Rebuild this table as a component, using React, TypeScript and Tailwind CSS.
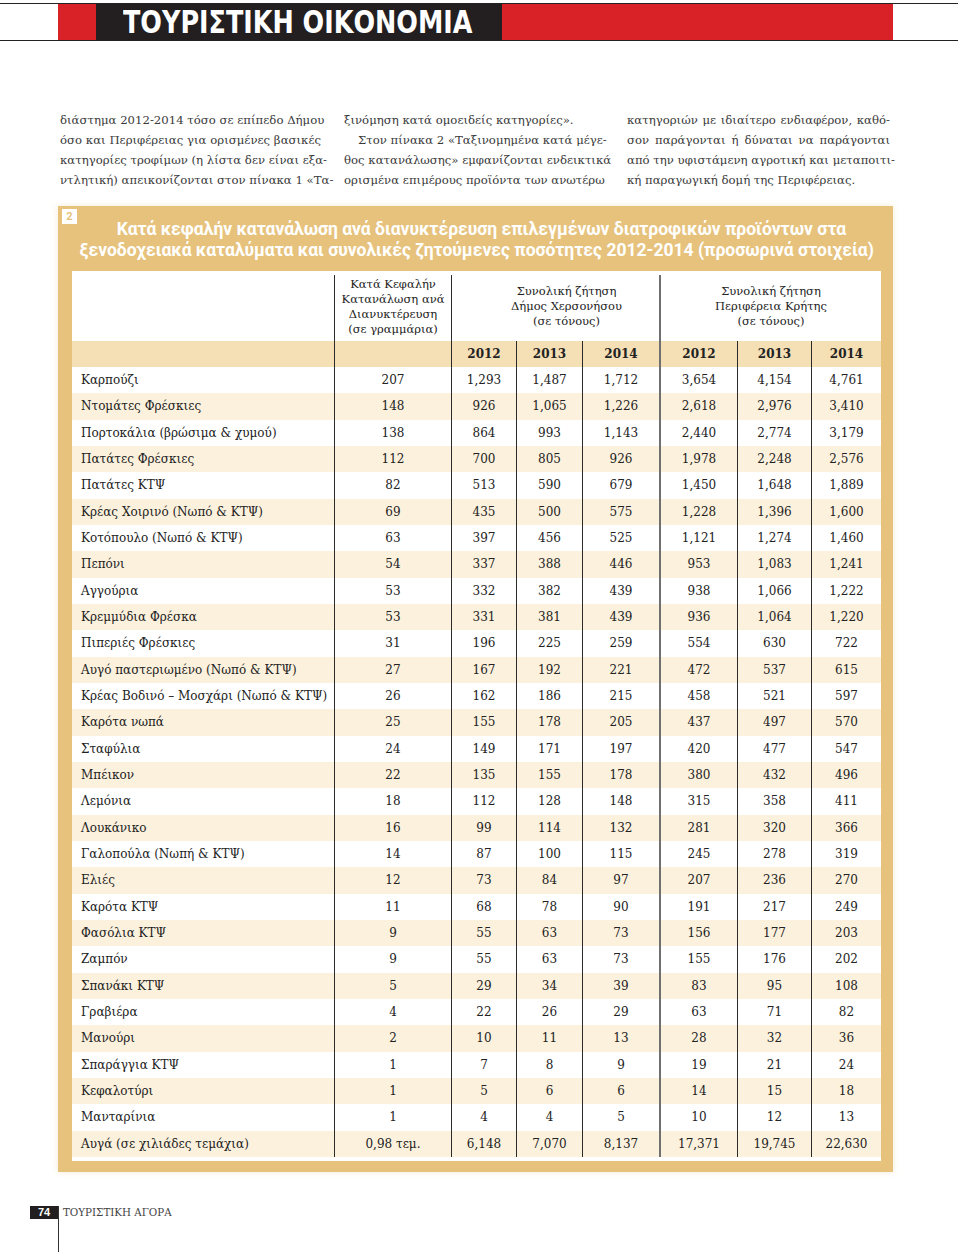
import React from 'react';

const rows: string[][] = [
  ['Καρπούζι', '207', '1,293', '1,487', '1,712', '3,654', '4,154', '4,761'],
  ['Ντομάτες Φρέσκιες', '148', '926', '1,065', '1,226', '2,618', '2,976', '3,410'],
  ['Πορτοκάλια (βρώσιμα & χυμού)', '138', '864', '993', '1,143', '2,440', '2,774', '3,179'],
  ['Πατάτες Φρέσκιες', '112', '700', '805', '926', '1,978', '2,248', '2,576'],
  ['Πατάτες ΚΤΨ', '82', '513', '590', '679', '1,450', '1,648', '1,889'],
  ['Κρέας Χοιρινό (Νωπό & ΚΤΨ)', '69', '435', '500', '575', '1,228', '1,396', '1,600'],
  ['Κοτόπουλο (Νωπό & ΚΤΨ)', '63', '397', '456', '525', '1,121', '1,274', '1,460'],
  ['Πεπόνι', '54', '337', '388', '446', '953', '1,083', '1,241'],
  ['Αγγούρια', '53', '332', '382', '439', '938', '1,066', '1,222'],
  ['Κρεμμύδια Φρέσκα', '53', '331', '381', '439', '936', '1,064', '1,220'],
  ['Πιπεριές Φρέσκιες', '31', '196', '225', '259', '554', '630', '722'],
  ['Αυγό παστεριωμένο (Νωπό & ΚΤΨ)', '27', '167', '192', '221', '472', '537', '615'],
  ['Κρέας Βοδινό – Μοσχάρι (Νωπό & ΚΤΨ)', '26', '162', '186', '215', '458', '521', '597'],
  ['Καρότα νωπά', '25', '155', '178', '205', '437', '497', '570'],
  ['Σταφύλια', '24', '149', '171', '197', '420', '477', '547'],
  ['Μπέικον', '22', '135', '155', '178', '380', '432', '496'],
  ['Λεμόνια', '18', '112', '128', '148', '315', '358', '411'],
  ['Λουκάνικο', '16', '99', '114', '132', '281', '320', '366'],
  ['Γαλοπούλα (Νωπή & ΚΤΨ)', '14', '87', '100', '115', '245', '278', '319'],
  ['Ελιές', '12', '73', '84', '97', '207', '236', '270'],
  ['Καρότα ΚΤΨ', '11', '68', '78', '90', '191', '217', '249'],
  ['Φασόλια ΚΤΨ', '9', '55', '63', '73', '156', '177', '203'],
  ['Ζαμπόν', '9', '55', '63', '73', '155', '176', '202'],
  ['Σπανάκι ΚΤΨ', '5', '29', '34', '39', '83', '95', '108'],
  ['Γραβιέρα', '4', '22', '26', '29', '63', '71', '82'],
  ['Μανούρι', '2', '10', '11', '13', '28', '32', '36'],
  ['Σπαράγγια ΚΤΨ', '1', '7', '8', '9', '19', '21', '24'],
  ['Κεφαλοτύρι', '1', '5', '6', '6', '14', '15', '18'],
  ['Μανταρίνια', '1', '4', '4', '5', '10', '12', '13'],
  ['Αυγά (σε χιλιάδες τεμάχια)', '0,98 τεμ.', '6,148', '7,070', '8,137', '17,371', '19,745', '22,630'],
];

const years = ['2012', '2013', '2014', '2012', '2013', '2014'];

// separators per column (index 0 = product label)
const sep = [
  'pl-[9px] text-left',
  'border-l border-[#2b2b2b] text-center',
  'border-l border-[#2b2b2b] text-center',
  'border-l border-[#2b2b2b] text-center',
  'border-l border-[#2b2b2b] text-center',
  'border-l-2 border-[#707070] text-center',
  'border-l border-[#2b2b2b] text-center',
  'border-l border-[#2b2b2b] text-center',
];

const gridCols = 'grid grid-cols-[262px_117px_65px_66px_77px_78px_74px_70px]';

const serif = "font-['DejaVu_Serif',serif]";

const Line = ({ text, justify = true, indent = false }: { text: string; justify?: boolean; indent?: boolean }) => (
  <div className={`${justify ? 'text-justify [text-align-last:justify]' : 'text-left'} ${indent ? 'pl-[14px]' : ''} whitespace-nowrap`}>
    {text}
  </div>
);

const App = () => {
  return (
    <div className={`w-[960px] h-[1257px] bg-white flex flex-col ${serif}`}>
      {/* Top section bar */}
      <div className="mt-[3px] w-[958px] h-[38px] border-y-[1.5px] border-[#222] flex">
        <div className="w-[58px] bg-white" />
        <div className="w-[38px] bg-[#d92128]" />
        <div className="w-[406px] bg-[#231f20] flex items-center pl-[27px] overflow-hidden">
          <span className="inline-block [transform-origin:left_center] [transform:scaleX(0.795)] font-['DejaVu_Sans',sans-serif] font-bold text-white text-[32px] leading-none whitespace-nowrap">
            ΤΟΥΡΙΣΤΙΚΗ ΟΙΚΟΝΟΜΙΑ
          </span>
        </div>
        <div className="w-[391px] bg-[#d92128]" />
        <div className="flex-1 bg-white" />
      </div>

      {/* Body text */}
      <div className="mt-[69px] flex text-[11.7px] leading-[20px] text-[#3a3a3a]">
        <div className="ml-[60px] w-[261px]">
          <Line text="διάστημα 2012-2014 τόσο σε επίπεδο Δήμου" />
          <Line text="όσο και Περιφέρειας για ορισμένες βασικές" />
          <Line text="κατηγορίες τροφίμων (η λίστα δεν είναι εξα-" />
          <Line text="ντλητική) απεικονίζονται στον πίνακα 1 «Τα-" />
        </div>
        <div className="ml-[23px] w-[258px]">
          <Line text="ξινόμηση κατά ομοειδείς κατηγορίες»." justify={false} />
          <Line text="Στον πίνακα 2 «Ταξινομημένα κατά μέγε-" indent />
          <Line text="θος κατανάλωσης» εμφανίζονται ενδεικτικά" />
          <Line text="ορισμένα επιμέρους προϊόντα των ανωτέρω" />
        </div>
        <div className="ml-[25px] w-[263px]">
          <Line text="κατηγοριών με ιδιαίτερο ενδιαφέρον, καθό-" />
          <Line text="σον παράγονται ή δύναται να παράγονται" />
          <Line text="από την υφιστάμενη αγροτική και μεταποιτι-" />
          <Line text="κή παραγωγική δομή της Περιφέρειας." justify={false} />
        </div>
      </div>

      {/* Table box */}
      <div className="mt-[16px] ml-[58px] w-[835px] bg-[#e6c27d] pl-[14px] pr-[12px] pb-[11px] shadow-[0_0_6px_rgba(230,194,125,0.35)]">
        <div className="relative h-[65px] pt-[13px]">
          <div className="absolute left-[-10px] top-[3px] w-[15px] h-[15px] bg-white flex items-center justify-center font-['Roboto',sans-serif] font-bold text-[11px] leading-none text-[#e6c27d]">
            2
          </div>
          <div className="text-center font-['Roboto','Open_Sans',sans-serif] font-bold text-white text-[17.5px] leading-[21px] whitespace-nowrap">
            <div className="pl-[10px]">Κατά κεφαλήν κατανάλωση ανά διανυκτέρευση επιλεγμένων διατροφικών προϊόντων στα</div>
            <div>ξενοδοχειακά καταλύματα και συνολικές ζητούμενες ποσότητες 2012-2014 (προσωρινά στοιχεία)</div>
          </div>
        </div>

        <div className="bg-white w-[809px] pt-1 pb-1 text-[#222]">
          {/* Group header */}
          <div className={`${gridCols} h-[66px] text-[11.5px] leading-[15px]`}>
            <div />
            <div className="border-l border-[#2b2b2b] flex flex-col items-center justify-center text-center pb-[2px] whitespace-nowrap">
              <div>Κατά Κεφαλήν</div>
              <div>Κατανάλωση ανά</div>
              <div>Διανυκτέρευση</div>
              <div>(σε γραμμάρια)</div>
            </div>
            <div className="col-span-3 border-l border-[#2b2b2b] flex flex-col items-center justify-center text-center pl-[22px] pb-[4px]">
              <div>Συνολική ζήτηση</div>
              <div>Δήμος Χερσονήσου</div>
              <div>(σε τόνους)</div>
            </div>
            <div className="col-span-3 border-l-2 border-[#707070] flex flex-col items-center justify-center text-center pb-[4px]">
              <div>Συνολική ζήτηση</div>
              <div>Περιφέρεια Κρήτης</div>
              <div>(σε τόνους)</div>
            </div>
          </div>

          {/* Year header */}
          <div className={`${gridCols} h-[26px] bg-[#f5dfb4] text-[12px] font-bold`}>
            <div />
            <div className="border-l border-[#2b2b2b]" />
            {years.map((y, i) => (
              <div key={i} className={`${sep[i + 2]} flex items-center justify-center`}>
                {y}
              </div>
            ))}
          </div>

          {/* Data rows */}
          {rows.map((r, ri) => (
            <div key={ri} className={`${gridCols} h-[26.33px] text-[12px] ${ri % 2 === 1 ? 'bg-[#fcf1dd]' : 'bg-white'}`}>
              {r.map((c, ci) => (
                <div key={ci} className={`${sep[ci]} flex items-center ${ci === 0 ? 'justify-start' : 'justify-center'} whitespace-nowrap`}>
                  {c}
                </div>
              ))}
            </div>
          ))}
        </div>
      </div>

      {/* Footer */}
      <div className="mt-[34px] flex">
        <div className="ml-[30px] w-[28px] h-[13px] bg-[#231f20] flex items-center justify-center font-['Liberation_Sans',sans-serif] font-bold text-white text-[11px] leading-none">
          74
        </div>
        <div className="w-px h-[46px] bg-[#333]" />
        <div className="pl-[4px] text-[10.3px] leading-[13px] text-[#444]">ΤΟΥΡΙΣΤΙΚΗ ΑΓΟΡΑ</div>
      </div>
    </div>
  );
};

export default App;
